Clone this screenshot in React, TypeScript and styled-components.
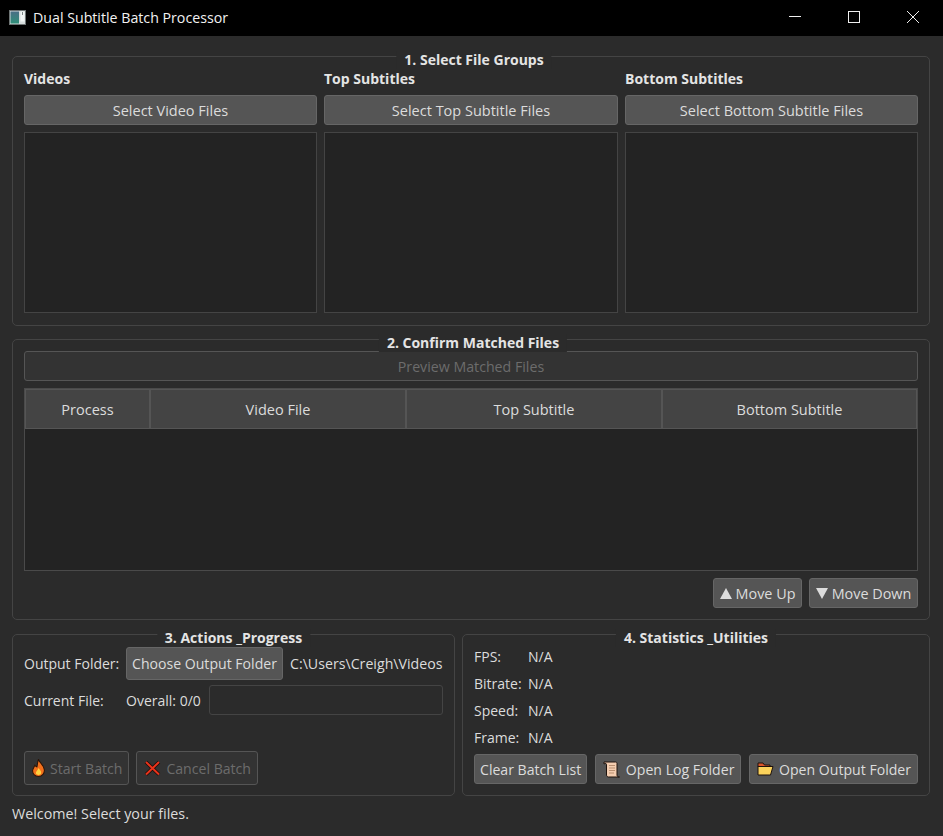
import React from "react"
import styled, {createGlobalStyle} from "styled-components"

const GlobalStyle = createGlobalStyle`
    html, body {
        margin: 0;
        padding: 0;
        background: #2b2b2b;
    }
    * {
        box-sizing: border-box;
    }
`

const Window = styled.div`
    width: 943px;
    height: 836px;
    display: flex;
    flex-direction: column;
    overflow: hidden;
    background: #2b2b2b;
    color: #dcdcdc;
    font-family: "Open Sans", "Noto Sans", "Liberation Sans", sans-serif;
    font-size: 14px;
`

const TitleBar = styled.div`
    height: 36px;
    flex: none;
    display: flex;
    align-items: center;
    background: #000;
    color: #f2f2f2;
    font-size: 14.2px;
    padding: 0 1px 2px 9px;
`

const TitleText = styled.span`
    margin-left: 7px;
    flex: 1;
`

const WinButton = styled.div`
    width: 59px;
    height: 34px;
    display: flex;
    align-items: center;
    justify-content: center;
`

const Content = styled.div`
    flex: 1;
    display: flex;
    flex-direction: column;
    padding: 20px 13px 0 12px;
`

const Group = styled.section<{$height: number; $top?: number}>`
    position: relative;
    height: ${(p) => p.$height}px;
    margin-top: ${(p) => p.$top ?? 0}px;
    flex: none;
    border: 1px solid #444;
    border-radius: 5px;
    padding: 11px 11px 12px;
    min-width: 0;
`

const Legend = styled.div<{$offset?: number}>`
    position: absolute;
    top: -6px;
    left: calc(50% + ${(p) => p.$offset ?? 0}px);
    transform: translateX(-50%);
    padding: 0 8px;
    background: #2b2b2b;
    font-weight: 700;
    line-height: 18px;
    white-space: nowrap;
    color: #e4e4e4;
`

const FileColumns = styled.div`
    display: grid;
    grid-template-columns: 293px 294px 293px;
    gap: 7px;
    height: 100%;
`

const FileColumn = styled.div`
    display: flex;
    flex-direction: column;
`

const ColumnLabel = styled.div`
    height: 27px;
    line-height: 22px;
    font-weight: 700;
    color: #e4e4e4;
`

const Button = styled.button<{$height?: number}>`
    height: ${(p) => p.$height ?? 30}px;
    flex: none;
    display: inline-flex;
    align-items: center;
    justify-content: center;
    gap: 5px;
    padding: 0 5px;
    border: 1px solid #666;
    border-radius: 3px;
    background: #555;
    color: #dcdcdc;
    font: inherit;
    font-size: 14.1px;
    white-space: nowrap;

    &:disabled {
        background: #333;
        border-color: #555;
        color: #6c6c6c;
    }
`

const SelectButton = styled(Button)`
    font-size: 14.5px;
`

const IconButton = styled(Button)`
    padding: 0 6px 0 7px;
`

const MoveButton = styled(Button)<{$wide?: boolean}>`
    width: ${(p) => (p.$wide ? 109 : 89)}px;
    font-size: 14.4px;
    gap: 4px;
    padding: 0;
`

const FileList = styled.div`
    flex: 1;
    margin-top: 7px;
    background: #232323;
    border: 1px solid #444;
`

const WideButton = styled(Button)`
    width: 100%;
    font-size: 14.2px;
`

const Table = styled.div`
    height: 183px;
    margin-top: 7px;
    display: flex;
    flex-direction: column;
    background: #232323;
    border: 1px solid #4a4a4a;
`

const TableHead = styled.div`
    height: 40px;
    flex: none;
    display: grid;
    grid-template-columns: 125px 256px 256px 1fr;
`

const HeadCell = styled.div`
    display: flex;
    align-items: center;
    justify-content: center;
    background: #444;
    border: 1px solid #555;
    font-size: 14.5px;
`

const MoveRow = styled.div`
    display: flex;
    justify-content: flex-end;
    gap: 7px;
    margin-top: 7px;
`

const BottomRow = styled.div`
    display: grid;
    grid-template-columns: 443px 468px;
    gap: 7px;
    margin-top: 14px;
`

const OutputRow = styled.div`
    display: flex;
    align-items: center;
    height: 34px;
`

const RowLabel = styled.span<{$width: number}>`
    width: ${(p) => p.$width}px;
    flex: none;
`

const PathText = styled.span`
    margin-left: 7px;
    font-size: 14.2px;
    white-space: nowrap;
`

const ProgressRow = styled.div`
    display: flex;
    align-items: center;
    height: 30px;
    margin-top: 5px;
`

const ProgressBar = styled.div`
    flex: 1;
    height: 30px;
    margin-left: 8px;
    background: #2b2b2b;
    border: 1px solid #444;
    border-radius: 3px;
`

const ActionRow = styled.div`
    display: flex;
    gap: 7px;
    margin-top: 36px;
`

const StatRow = styled.div`
    display: flex;
    align-items: center;
    height: 27px;
`

const StatList = styled.div`
    display: flex;
    flex-direction: column;
    margin-bottom: 2px;
    margin-top: -3px;
`

const UtilityRow = styled.div`
    display: flex;
    justify-content: space-between;
    margin-top: 3px;
`

const StatusBar = styled.div`
    margin-top: 8px;
    font-size: 14.3px;
    line-height: 20px;
`

const Flame = () => (
    <svg width="13" height="18" viewBox="2 0.5 12 17">
        <path d="M8 1c1 3 5 5 5.500 9.500C14 14 11.500 17 8 17s-6-2.500-5.500-6C3 9 4 8 4.500 6.500 5.500 7.500 6 8 6.500 8 7 6 7 3 8 1z" fill="#f2701c" stroke="#2a1408" strokeWidth="1" />
        <path d="M8 9c1 1.500 3 3 2.500 5C10 16 6 16 5.500 14 5.300 12.500 7.500 11 8 9z" fill="#ffd23f" />
    </svg>
)

const CrossMark = () => (
    <svg width="17" height="16" viewBox="0 0 16 16">
        <path d="M1.500 2 14.500 14.500M14.500 2 1.500 14.500" stroke="#1c0b08" strokeWidth="3.500" />
        <path d="M1.500 2 14.500 14.500M14.500 2 1.500 14.500" stroke="#e8341c" strokeWidth="2" />
    </svg>
)

const Scroll = () => (
    <svg width="18" height="17" viewBox="0 0 17 17">
        <path d="M.5 1h11.500c1 0 1.500 .7 1.500 1.500V14c0 1 .7 2 2.500 2H5c-1 0-2-.8-2-2V3.500C3 2.500 2 2 .5 3z" fill="#f4cdb0" stroke="#1e120c" strokeWidth="1" />
        <path d="M5.500 4.500h6M5.500 7h6M5.500 9.500h6M5.500 12h5" stroke="#b98f70" strokeWidth="1" />
    </svg>
)

const Folder = () => (
    <svg width="17" height="14" viewBox="0 0 17 14">
        <path d="M1 1h5l1.500 2H13v2H1z" fill="#d9542b" stroke="#1e120c" strokeWidth="1" />
        <path d="M1 13V4.500h15L13.500 13z" fill="#fbd25b" stroke="#1e120c" strokeWidth="1" />
    </svg>
)

const Triangle = ({down}: {down?: boolean}) => (
    <svg width="12" height="11" viewBox="0 0 12 11">
        <path d={down ? "M0 0h12L6 11z" : "M6 0l6 11H0z"} fill="#dcdcdc" />
    </svg>
)

const AppIcon = () => (
    <svg width="17" height="15" viewBox="0 0 17 15">
        <defs>
            <linearGradient id="appFill" x1="0" y1="0" x2="0" y2="1">
                <stop offset="0" stopColor="#4a6f86" />
                <stop offset="1" stopColor="#2f8f78" />
            </linearGradient>
        </defs>
        <rect x="0.500" y="0.500" width="16" height="14" fill="#d5dcdc" stroke="#6e7474" />
        <rect x="1.500" y="1.500" width="8.500" height="12" fill="url(#appFill)" />
        <rect x="11.500" y="1.500" width="4" height="10" fill="#f1f5f4" />
        <rect x="13" y="2" width="1" height="3" fill="#7b8585" />
    </svg>
)

const App: React.FC = () => (
    <>
        <GlobalStyle />
        <Window>
            <TitleBar>
                <AppIcon />
                <TitleText>Dual Subtitle Batch Processor</TitleText>
                <WinButton>
                    <svg width="12" height="12" viewBox="0 0 12 12">
                        <path d="M0 5.500h12" stroke="#eee" strokeWidth="1" />
                    </svg>
                </WinButton>
                <WinButton>
                    <svg width="12" height="12" viewBox="0 0 12 12">
                        <rect x="0.500" y="0.500" width="11" height="11" fill="none" stroke="#eee" />
                    </svg>
                </WinButton>
                <WinButton>
                    <svg width="12" height="12" viewBox="0 0 12 12">
                        <path d="M0 0l12 12M12 0L0 12" stroke="#eee" strokeWidth="1" />
                    </svg>
                </WinButton>
            </TitleBar>
            <Content>
                <Group $height={270}>
                    <Legend $offset={3}>1. Select File Groups</Legend>
                    <FileColumns>
                        <FileColumn>
                            <ColumnLabel>Videos</ColumnLabel>
                            <SelectButton>Select Video Files</SelectButton>
                            <FileList />
                        </FileColumn>
                        <FileColumn>
                            <ColumnLabel>Top Subtitles</ColumnLabel>
                            <SelectButton>Select Top Subtitle Files</SelectButton>
                            <FileList />
                        </FileColumn>
                        <FileColumn>
                            <ColumnLabel>Bottom Subtitles</ColumnLabel>
                            <SelectButton>Select Bottom Subtitle Files</SelectButton>
                            <FileList />
                        </FileColumn>
                    </FileColumns>
                </Group>
                <Group $height={281} $top={13}>
                    <Legend $offset={2}>2. Confirm Matched Files</Legend>
                    <WideButton disabled>Preview Matched Files</WideButton>
                    <Table>
                        <TableHead>
                            <HeadCell>Process</HeadCell>
                            <HeadCell>Video File</HeadCell>
                            <HeadCell>Top Subtitle</HeadCell>
                            <HeadCell>Bottom Subtitle</HeadCell>
                        </TableHead>
                    </Table>
                    <MoveRow>
                        <MoveButton>
                            <Triangle />
                            Move Up
                        </MoveButton>
                        <MoveButton $wide>
                            <Triangle down />
                            Move Down
                        </MoveButton>
                    </MoveRow>
                </Group>
                <BottomRow>
                    <Group $height={162}>
                        <Legend>3. Actions _Progress</Legend>
                        <OutputRow>
                            <RowLabel $width={102}>Output Folder:</RowLabel>
                            <Button $height={33}>Choose Output Folder</Button>
                            <PathText>C:\Users\Creigh\Videos</PathText>
                        </OutputRow>
                        <ProgressRow>
                            <RowLabel $width={102}>Current File:</RowLabel>
                            <span>Overall: 0/0</span>
                            <ProgressBar />
                        </ProgressRow>
                        <ActionRow>
                            <IconButton $height={34} disabled>
                                <Flame />
                                Start Batch
                            </IconButton>
                            <IconButton $height={34} disabled>
                                <CrossMark />
                                Cancel Batch
                            </IconButton>
                        </ActionRow>
                    </Group>
                    <Group $height={162}>
                        <Legend>4. Statistics _Utilities</Legend>
                        <StatList>
                            <StatRow>
                                <RowLabel $width={54}>FPS:</RowLabel>N/A
                            </StatRow>
                            <StatRow>
                                <RowLabel $width={54}>Bitrate:</RowLabel>N/A
                            </StatRow>
                            <StatRow>
                                <RowLabel $width={54}>Speed:</RowLabel>N/A
                            </StatRow>
                            <StatRow>
                                <RowLabel $width={54}>Frame:</RowLabel>N/A
                            </StatRow>
                        </StatList>
                        <UtilityRow>
                            <Button>Clear Batch List</Button>
                            <IconButton>
                                <Scroll />
                                Open Log Folder
                            </IconButton>
                            <IconButton>
                                <Folder />
                                Open Output Folder
                            </IconButton>
                        </UtilityRow>
                    </Group>
                </BottomRow>
                <StatusBar>Welcome! Select your files.</StatusBar>
            </Content>
        </Window>
    </>
)

export default App
